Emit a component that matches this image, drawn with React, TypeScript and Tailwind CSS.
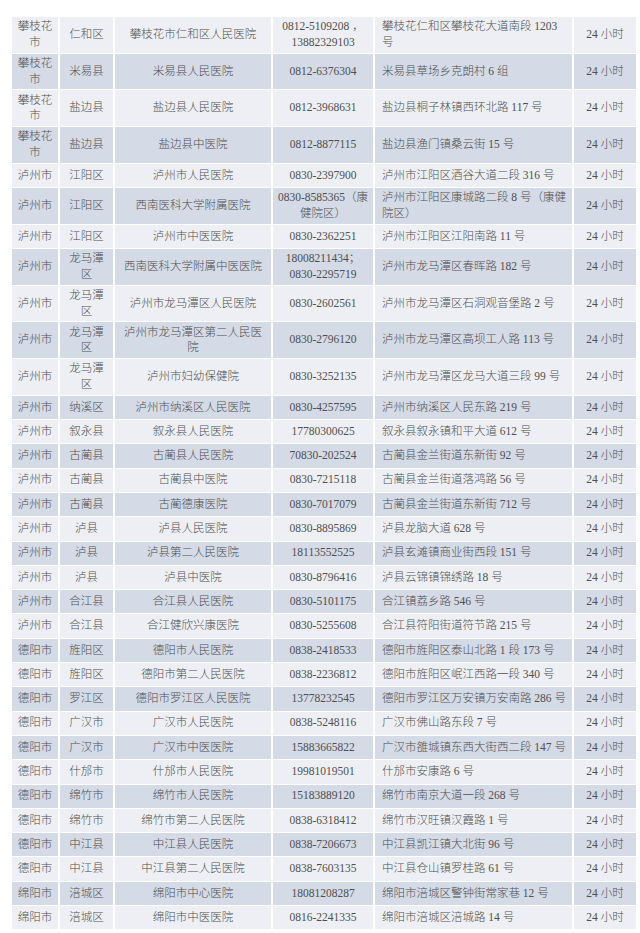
type Row = [string, string, string, string, string];

// city, district, hospital, phone, address ("\n" marks where the cell wraps)
const rows: Row[] = [
  ['攀枝花\n市', '仁和区', '攀枝花市仁和区人民医院', '0812-5109208 ，\n13882329103', '攀枝花仁和区攀枝花大道南段 1203\n号'],
  ['攀枝花\n市', '米易县', '米易县人民医院', '0812-6376304', '米易县草场乡克朗村 6 组'],
  ['攀枝花\n市', '盐边县', '盐边县人民医院', '0812-3968631', '盐边县桐子林镇西环北路 117 号'],
  ['攀枝花\n市', '盐边县', '盐边县中医院', '0812-8877115', '盐边县渔门镇桑云街 15 号'],
  ['泸州市', '江阳区', '泸州市人民医院', '0830-2397900', '泸州市江阳区酒谷大道二段 316 号'],
  ['泸州市', '江阳区', '西南医科大学附属医院', '0830-8585365（康\n健院区）', '泸州市江阳区康城路二段 8 号（康健\n院区）'],
  ['泸州市', '江阳区', '泸州市中医医院', '0830-2362251', '泸州市江阳区江阳南路 11 号'],
  ['泸州市', '龙马潭\n区', '西南医科大学附属中医医院', '18008211434；\n0830-2295719', '泸州市龙马潭区春晖路 182 号'],
  ['泸州市', '龙马潭\n区', '泸州市龙马潭区人民医院', '0830-2602561', '泸州市龙马潭区石洞观音堡路 2 号'],
  ['泸州市', '龙马潭\n区', '泸州市龙马潭区第二人民医\n院', '0830-2796120', '泸州市龙马潭区高坝工人路 113 号'],
  ['泸州市', '龙马潭\n区', '泸州市妇幼保健院', '0830-3252135', '泸州市龙马潭区龙马大道三段 99 号'],
  ['泸州市', '纳溪区', '泸州市纳溪区人民医院', '0830-4257595', '泸州市纳溪区人民东路 219 号'],
  ['泸州市', '叙永县', '叙永县人民医院', '17780300625', '叙永县叙永镇和平大道 612 号'],
  ['泸州市', '古蔺县', '古蔺县人民医院', '70830-202524', '古蔺县金兰街道东新街 92 号'],
  ['泸州市', '古蔺县', '古蔺县中医院', '0830-7215118', '古蔺县金兰街道落鸿路 56 号'],
  ['泸州市', '古蔺县', '古蔺德康医院', '0830-7017079', '古蔺县金兰街道东新街 712 号'],
  ['泸州市', '泸县', '泸县人民医院', '0830-8895869', '泸县龙脑大道 628 号'],
  ['泸州市', '泸县', '泸县第二人民医院', '18113552525', '泸县玄滩镇商业街西段 151 号'],
  ['泸州市', '泸县', '泸县中医院', '0830-8796416', '泸县云锦镇锦绣路 18 号'],
  ['泸州市', '合江县', '合江县人民医院', '0830-5101175', '合江镇荔乡路 546 号'],
  ['泸州市', '合江县', '合江健欣兴康医院', '0830-5255608', '合江县符阳街道符节路 215 号'],
  ['德阳市', '旌阳区', '德阳市人民医院', '0838-2418533', '德阳市旌阳区泰山北路 1 段 173 号'],
  ['德阳市', '旌阳区', '德阳市第二人民医院', '0838-2236812', '德阳市旌阳区岷江西路一段 340 号'],
  ['德阳市', '罗江区', '德阳市罗江区人民医院', '13778232545', '德阳市罗江区万安镇万安南路 286 号'],
  ['德阳市', '广汉市', '广汉市人民医院', '0838-5248116', '广汉市佛山路东段 7 号'],
  ['德阳市', '广汉市', '广汉市中医医院', '15883665822', '广汉市雒城镇东西大街西二段 147 号'],
  ['德阳市', '什邡市', '什邡市人民医院', '19981019501', '什邡市安康路 6 号'],
  ['德阳市', '绵竹市', '绵竹市人民医院', '15183889120', '绵竹市南京大道一段 268 号'],
  ['德阳市', '绵竹市', '绵竹市第二人民医院', '0838-6318412', '绵竹市汉旺镇汉霞路 1 号'],
  ['德阳市', '中江县', '中江县人民医院', '0838-7206673', '中江县凯江镇大北街 96 号'],
  ['德阳市', '中江县', '中江县第二人民医院', '0838-7603135', '中江县仓山镇罗桂路 61 号'],
  ['绵阳市', '涪城区', '绵阳市中心医院', '18081208287', '绵阳市涪城区警钟街常家巷 12 号'],
  ['绵阳市', '涪城区', '绵阳市中医医院', '0816-2241335', '绵阳市涪城区涪城路 14 号'],
];

const cell = 'border-x-2 border-y border-white px-1 whitespace-pre-line leading-[15.7px]';

export default function App() {
  return (
    <div className="min-h-screen bg-white pl-[10px] pt-[16px] font-['Liberation_Serif','Noto_Sans_CJK_SC',serif] text-[11.5px] font-light text-[#4f4f4f]">
      <table className="w-[626px] table-fixed border-collapse">
        <colgroup>
          <col className="w-[48px]" />
          <col className="w-[55px]" />
          <col className="w-[158px]" />
          <col className="w-[102px]" />
          <col className="w-[199px]" />
          <col className="w-[64px]" />
        </colgroup>
        <tbody>
          {rows.map((r, i) => {
            const tall = r.some((c) => c.includes('\n'));
            return (
              <tr
                key={i}
                className={`${i % 2 === 0 ? 'bg-[#edeff4]' : 'bg-[#d4dae6]'} ${tall ? 'h-[36.7px]' : 'h-[24.3px]'}`}
              >
                <td className={`${cell} text-center`}>{r[0]}</td>
                <td className={`${cell} text-center`}>{r[1]}</td>
                <td className={`${cell} text-center`}>{r[2]}</td>
                <td className={`${cell} text-center`}>{r[3]}</td>
                <td className={`${cell} pl-[7px] text-left`}>{r[4]}</td>
                <td className={`${cell} text-center`}>24 小时</td>
              </tr>
            );
          })}
        </tbody>
      </table>
    </div>
  );
}
